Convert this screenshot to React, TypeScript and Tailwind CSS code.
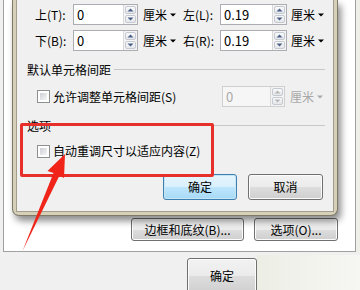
import React from 'react';

const font = { fontFamily: '"Noto Sans CJK SC", "Noto Sans", sans-serif' };

function Spinner({ disabled }: { disabled?: boolean }) {
  const c = disabled ? '#b8b8b8' : '#4a5f86';
  return (
    <div className="flex h-full w-[14px] flex-col gap-px border-l border-[#d8d8d8] bg-[#f4f4f4] p-px">
      {[0, 1].map((i) => (
        <div
          key={i}
          className="flex flex-1 items-center justify-center rounded-[2px] border border-[#c4c9d2] bg-[linear-gradient(to_bottom,#fafafa,#e4e6ea)]"
        >
          <svg width="7" height="4" viewBox="0 0 7 4">
            {i === 0 ? <path d="M0.5 3.5 L3.5 0.5 L6.5 3.5 Z" fill={c} /> : <path d="M0.5 0.5 L3.5 3.5 L6.5 0.5 Z" fill={c} />}
          </svg>
        </div>
      ))}
    </div>
  );
}

function NumInput({ value, w, disabled }: { value: string; w: string; disabled?: boolean }) {
  return (
    <div
      className={`flex h-[21px] ${w} items-stretch border ${
        disabled ? 'border-[#cfcfcf] bg-[#f6f6f6] text-[#a8a8a8]' : 'border-[#abadb3] bg-white text-black'
      }`}
    >
      <div className="flex flex-1 items-center pl-[3px] text-[13px]">{value}</div>
      <Spinner disabled={disabled} />
    </div>
  );
}

function Unit({ disabled }: { disabled?: boolean }) {
  return (
    <div className={`flex items-center gap-[3px] text-[12px] ${disabled ? 'text-[#a8a8a8]' : 'text-black'}`}>
      <span>厘米</span>
      <svg width="6" height="4" viewBox="0 0 6 4">
        <path d="M0 0.5 L6 0.5 L3 3.5 Z" fill={disabled ? '#a8a8a8' : '#000'} />
      </svg>
    </div>
  );
}

function Check() {
  return (
    <div className="h-[13px] w-[13px] border border-[#8e8f8f] bg-white p-[2px]">
      <div className="h-full w-full bg-[linear-gradient(135deg,#cbcfd5,#f6f6f6)]" />
    </div>
  );
}

function WinButton({ label, w, h, primary }: { label: string; w: string; h: string; primary?: boolean }) {
  return (
    <div
      className={`flex ${w} ${h} items-center justify-center rounded-[3px] border text-[12px] text-black ${
        primary
          ? 'border-[#3c7fb1] bg-[linear-gradient(to_bottom,#e6f5fd_0%,#d9f0fc_50%,#bee6fd_51%,#a7d9f5_100%)] shadow-[inset_0_0_0_1px_#c6e6f8]'
          : 'border-[#707070] bg-[linear-gradient(to_bottom,#f2f2f2_0%,#ebebeb_50%,#dddddd_51%,#cfcfcf_100%)] shadow-[inset_0_0_0_1px_#fcfcfc]'
      }`}
    >
      {label}
    </div>
  );
}

function GroupHead({ title }: { title: string }) {
  return (
    <div className="flex items-center gap-[3px] pl-[10px] pr-[8px] text-[12px] leading-[16px] text-black">
      <span>{title}</span>
      <div className="h-[2px] flex-1 border-t border-[#c8c8c8] border-b-white" />
    </div>
  );
}

export default function App() {
  return (
    <div className="relative h-[290px] w-[360px] overflow-hidden bg-[#f0f0f0]" style={font}>
      {/* window behind the dialog */}
      <div className="flex h-[290px] flex-col">
        <div className="flex">
          <div className="ml-[3px] flex h-[252px] w-[353px] items-end justify-end gap-[10px] border-x border-b border-[#a0a0a0] bg-white pb-[10px] pr-[17px]">
            <WinButton label="边框和底纹(B)..." w="w-[113px]" h="h-[23px]" />
            <WinButton label="选项(O)..." w="w-[84px]" h="h-[23px]" />
          </div>
          <div className="flex-1 bg-[#eef0e8]" />
        </div>
        <div className="flex flex-1">
          <div className="ml-[187px] mt-[6px] h-[36px]">
            <WinButton label="确定" w="w-[70px]" h="h-[36px]" />
          </div>
          <div className="mt-[3px] flex-1 bg-[linear-gradient(to_right,#eceee6,#f6f7f2)]" />
        </div>
      </div>

      {/* table options dialog */}
      <div className="absolute left-[12px] top-0 h-[216px] w-[326px] rounded-b-[7px] border border-t-0 border-[#7f7a66] bg-[#d6d0bb] px-[3px] pb-[3px] shadow-[3px_5px_7px_rgba(0,0,0,0.45)]">
        <div className="flex h-full flex-col border border-t-0 border-[#a49e88] bg-[#f0f0f0] text-[12px] text-black">
          <div className="mt-[4px] flex h-[21px] items-center pl-[18px]">
            <span className="w-[38px]">上(T):</span>
            <NumInput value="0" w="w-[65px]" />
            <div className="ml-[5px] w-[40px]">
              <Unit />
            </div>
            <span className="w-[37px]">左(L):</span>
            <NumInput value="0.19" w="w-[67px]" />
            <div className="ml-[4px]">
              <Unit />
            </div>
          </div>
          <div className="mt-[5px] flex h-[21px] items-center pl-[18px]">
            <span className="w-[38px]">下(B):</span>
            <NumInput value="0" w="w-[65px]" />
            <div className="ml-[5px] w-[40px]">
              <Unit />
            </div>
            <span className="w-[37px]">右(R):</span>
            <NumInput value="0.19" w="w-[67px]" />
            <div className="ml-[4px]">
              <Unit />
            </div>
          </div>

          <div className="mt-[11px]">
            <GroupHead title="默认单元格间距" />
          </div>
          <div className="mt-[8px] flex h-[21px] items-center pl-[20px]">
            <div className="flex w-[185px] items-center gap-[3px]">
              <Check />
              <span>允许调整单元格间距(S)</span>
            </div>
            <NumInput value="0" w="w-[63px]" disabled />
            <div className="ml-[5px]">
              <Unit disabled />
            </div>
          </div>

          <div className="mt-[11px]">
            <GroupHead title="选项" />
          </div>
          <div className="mt-[9px] flex h-[16px] items-center gap-[3px] pl-[20px]">
            <Check />
            <span>自动重调尺寸以适应内容(Z)</span>
          </div>

          <div className="mt-[15px] flex justify-end gap-[11px] pr-[10px]">
            <WinButton label="确定" w="w-[74px]" h="h-[26px]" primary />
            <WinButton label="取消" w="w-[75px]" h="h-[26px]" />
          </div>
        </div>
      </div>

      {/* red highlight box */}
      <div className="absolute left-[20px] top-[123px] h-[54px] w-[194px] rounded-[2px] border-[3px] border-[#e8302a]" />

      {/* red arrow */}
      <svg className="pointer-events-none absolute left-0 top-0" width="360" height="290" viewBox="0 0 360 290">
        <polygon
          points="65,154 64,178 59.5,175.5 22.5,251 53.5,173 47.5,171"
          fill="#f02418"
        />
      </svg>
    </div>
  );
}
